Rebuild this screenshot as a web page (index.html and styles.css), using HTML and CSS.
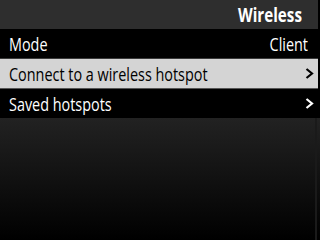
FILE: index.html
```html
<!DOCTYPE html>
<html>
<head>
<meta charset="utf-8">
<link rel="stylesheet" href="styles.css">
</head>
<body>
<div class="screen">
  <div class="header"><span class="title">Wireless</span></div>
  <div class="list">
    <div class="row"><span class="label">Mode</span><span class="value">Client</span></div>
    <div class="row selected"><span class="label">Connect to a wireless hotspot</span><svg class="chev" width="9" height="11" viewBox="0 0 9 11"><polyline points="1.5,1 7,5.5 1.5,10" fill="none" stroke="currentColor" stroke-width="2.2"/></svg></div>
    <div class="row"><span class="label">Saved hotspots</span><svg class="chev" width="9" height="11" viewBox="0 0 9 11"><polyline points="1.5,1 7,5.5 1.5,10" fill="none" stroke="currentColor" stroke-width="2.2"/></svg></div>
  </div>
  <div class="rest"><div class="scroll"></div></div>
</div>
</body>
</html>
```
FILE: styles.css
```css
html, body { margin: 0; padding: 0; background: #000; }
.screen {
  width: 320px; height: 240px; display: flex; flex-direction: column;
  font-family: "Open Sans", "Noto Sans", sans-serif;
  overflow: hidden; background: #000;
}
.header {
  height: 29px; background: #2e2e2e; display: flex; align-items: center; justify-content: flex-end;
  padding-right: 16px; margin-right: 2px; box-sizing: border-box;
}
.title { color: #fff; font-weight: bold; font-size: 19px; display: inline-block; transform: scaleX(0.8); transform-origin: right center; }
.list { display: flex; flex-direction: column; margin-right: 2px; }
.row {
  height: 30px; box-sizing: border-box; background: #000; color: #fff;
  display: flex; align-items: center; justify-content: space-between;
  padding: 0 4px 0 9px; font-size: 18px; border-bottom: 1px solid #3a3a3a;
}
.row:last-child { border-bottom: none; height: 29px; }
.row.selected { background: #d4d4d4; color: #000; border-bottom-color: #555; }
.label { display: inline-block; transform: scaleX(0.8); transform-origin: left center; white-space: nowrap; }
.value { display: inline-block; transform: scaleX(0.8); transform-origin: right center; margin-right: 6px; }
.chev { display: block; }
.rest {
  flex: 1; background: linear-gradient(#222, #000); position: relative;
}
.scroll { position: absolute; right: 3px; top: 0; bottom: 0; width: 2px; background: #1a1a1a; }
```
